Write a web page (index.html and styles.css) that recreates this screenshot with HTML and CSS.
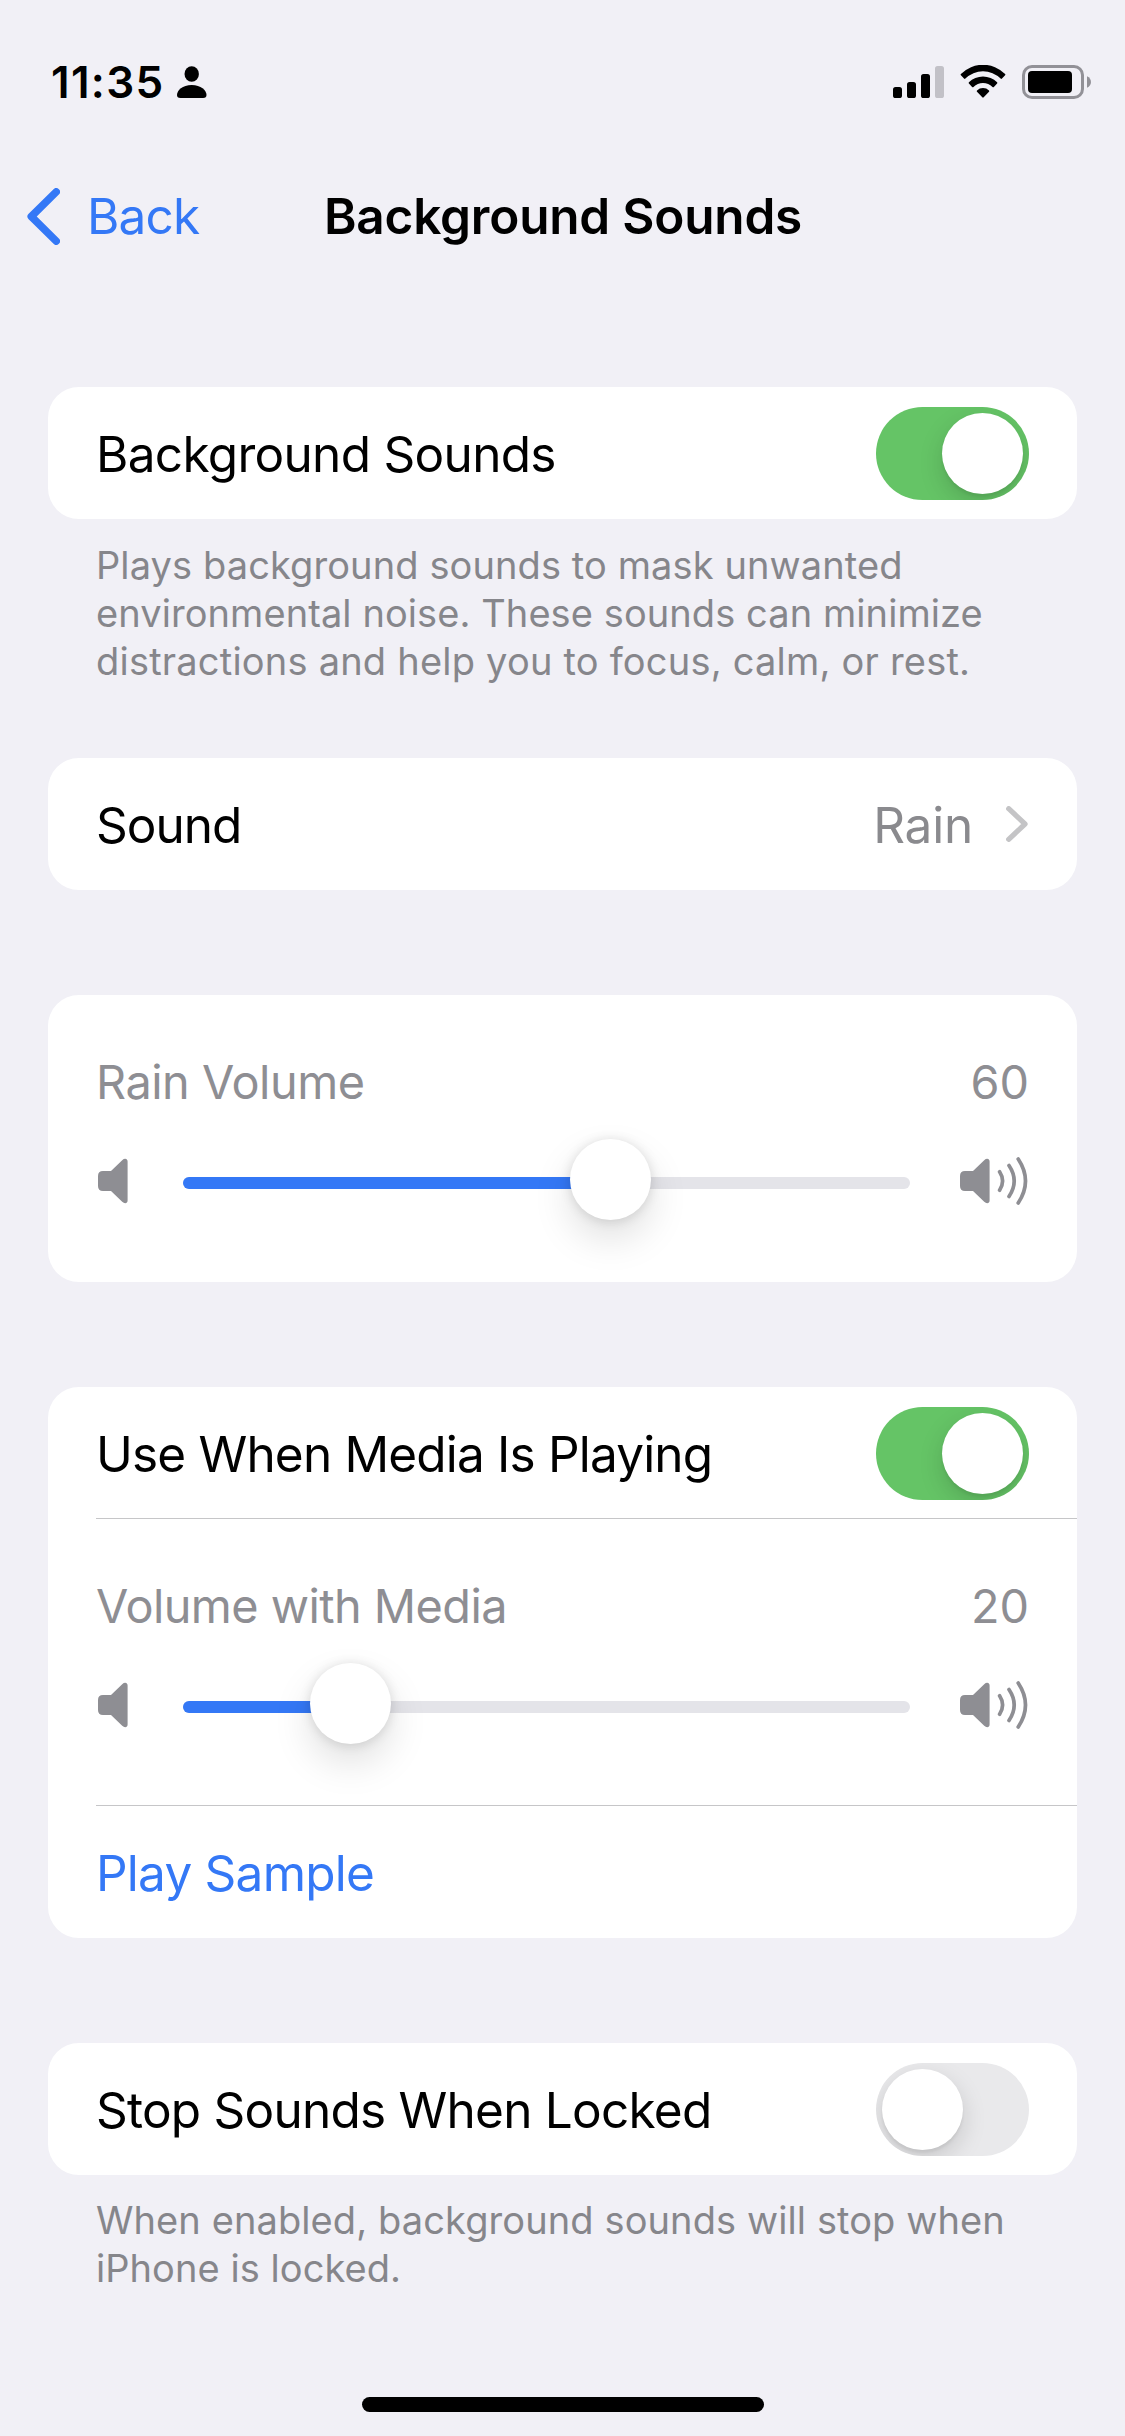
FILE: index.html
```html
<!DOCTYPE html>
<html lang="en">
<head>
<meta charset="utf-8">
<title>Background Sounds</title>
<link rel="stylesheet" href="styles.css">
</head>
<body>
<svg class="symbols" aria-hidden="true">
  <symbol id="speaker-low" viewBox="0 0 30 48">
    <path fill="currentColor" d="M5 14H13L24.2 3.2C26.5 1 29.6 1.4 29.6 4.6V43.4C29.6 46.6 26.5 47 24.2 44.8L13 34H5Q0 34 0 29V19Q0 14 5 14Z"/>
  </symbol>
  <symbol id="speaker-high" viewBox="0 0 68 48">
    <path fill="currentColor" d="M5 14H13L24.2 3.2C26.5 1 29.6 1.4 29.6 4.6V43.4C29.6 46.6 26.5 47 24.2 44.8L13 34H5Q0 34 0 29V19Q0 14 5 14Z"/>
    <path fill="none" stroke="currentColor" stroke-width="3.7" stroke-linecap="round" d="M39.6 14.8Q45.6 24 39.6 33.2M49 8.5Q59.4 24 49 39.5M58.2 2Q72.8 24 58.2 46"/>
  </symbol>
</svg>

<div class="screen">
  <div class="status-bar">
    <div class="status-left">
      <span class="clock">11:35</span>
      <svg class="person" width="30" height="32" viewBox="0 0 30 32">
        <ellipse cx="14.7" cy="8" rx="7.2" ry="7.8"/>
        <path d="M3.5 32C1 32 0 31 0 29C0 24.5 5.5 19 14.7 19S29.5 24.5 29.5 29C29.5 31 28.5 32 26 32Z"/>
      </svg>
    </div>
    <div class="status-right">
      <svg width="51" height="34" viewBox="0 0 51 34">
        <rect x="0" y="22" width="9" height="11" rx="2.6"/>
        <rect x="14" y="17" width="9" height="16" rx="2.6"/>
        <rect x="28" y="9" width="9" height="24" rx="2.6"/>
        <rect x="42" y="1" width="9" height="32" rx="2.6" fill="#c2c1c7"/>
      </svg>
      <svg width="46" height="34" viewBox="0 0 46 34">
        <path d="M.9 9A31 31 0 0 1 45.1 9Q45.7 9.6 45.1 10.2L42 13.6Q41.3 14.2 40.6 13.6A25 25 0 0 0 5.4 13.6Q4.7 14.2 4 13.6L.9 10.2Q.3 9.6 .9 9Z"/>
        <path d="M8.9 17.3A20 20 0 0 1 37.1 17.3Q37.7 18 37.1 18.6L33.9 21.9Q33.2 22.5 32.5 21.9A13.6 13.6 0 0 0 13.5 21.9Q12.8 22.5 12.1 21.9L8.9 18.6Q8.3 18 8.9 17.3Z"/>
        <path d="M17 25.5A8.5 8.5 0 0 1 29 25.5Q29.6 26.2 29 26.8L23.7 32.3Q23 33 22.3 32.3L17 26.8Q16.4 26.2 17 25.5Z"/>
      </svg>
      <svg width="69" height="34" viewBox="0 0 69 34">
        <rect x="1.5" y="1.5" width="59" height="31" rx="8.5" fill="none" stroke="#929197" stroke-width="3"/>
        <rect x="6" y="6" width="44" height="22" rx="4"/>
        <path d="M65 11.3C70.3 13.6 70.3 20.4 65 22.7Z" fill="#929197"/>
      </svg>
    </div>
  </div>

  <div class="nav-bar">
    <div class="back">
      <svg width="33" height="57" viewBox="0 0 33 57">
        <path d="M29.2 3.9L4.3 28.5L29.2 53.1" fill="none" stroke="currentColor" stroke-width="7.6" stroke-linecap="round" stroke-linejoin="round"/>
      </svg>
      <span class="back-label">Back</span>
    </div>
    <div class="title">Background Sounds</div>
  </div>

  <div class="settings">
    <div class="card">
      <div class="row">
        <span class="label label-sounds">Background Sounds</span>
        <span class="toggle toggle-on"><span class="toggle-knob"></span></span>
      </div>
    </div>
    <div class="note">
      <div class="note-a">Plays background sounds to mask unwanted</div>
      <div class="note-b">environmental noise. These sounds can minimize</div>
      <div class="note-c">distractions and help you to focus, calm, or rest.</div>
    </div>

    <div class="card card-after-note">
      <div class="row">
        <span class="label label-sound">Sound</span>
        <span class="choice">
          <span class="label choice-value">Rain</span>
          <svg width="23" height="36" viewBox="0 0 23 36">
            <path d="M2.7 2.7L19 18L2.7 33.3" fill="none" stroke="#c4c4c6" stroke-width="5.2" stroke-linecap="round" stroke-linejoin="round"/>
          </svg>
        </span>
      </div>
    </div>

    <div class="card">
      <div class="volume">
        <div class="volume-head"><span class="name-rain">Rain Volume</span><span>60</span></div>
        <div class="volume-control">
          <svg class="speaker" width="30" height="48"><use href="#speaker-low"/></svg>
          <div class="slider"><div class="slider-fill" style="width: 60%"></div><div class="slider-knob knob-rain"></div></div>
          <svg class="speaker" width="68" height="48"><use href="#speaker-high"/></svg>
        </div>
      </div>
    </div>

    <div class="card">
      <div class="row">
        <span class="label label-media">Use When Media Is Playing</span>
        <span class="toggle toggle-on"><span class="toggle-knob"></span></span>
      </div>
      <div class="separator"></div>
      <div class="volume">
        <div class="volume-head"><span class="name-media">Volume with Media</span><span>20</span></div>
        <div class="volume-control">
          <svg class="speaker" width="30" height="48"><use href="#speaker-low"/></svg>
          <div class="slider"><div class="slider-fill" style="width: 20%"></div><div class="slider-knob knob-media"></div></div>
          <svg class="speaker" width="68" height="48"><use href="#speaker-high"/></svg>
        </div>
      </div>
      <div class="separator"></div>
      <div class="row">
        <span class="label label-play">Play Sample</span>
      </div>
    </div>

    <div class="card">
      <div class="row">
        <span class="label label-stop">Stop Sounds When Locked</span>
        <span class="toggle"><span class="toggle-knob"></span></span>
      </div>
    </div>
    <div class="note note-last">
      <div class="note-d">When enabled, background sounds will stop when</div>
      <div class="note-e">iPhone is locked.</div>
    </div>
  </div>

  <div class="home-indicator"></div>
</div>
</body>
</html>
```

FILE: styles.css
```css
* {
  box-sizing: border-box;
}

body {
  margin: 0;
  background: #f1f0f6;
  color: #000;
  font-family: Inter, "Liberation Sans", sans-serif;
  white-space: nowrap;
}

svg {
  display: block;
  flex: none;
}

.symbols {
  display: none;
}

.screen {
  display: flex;
  flex-direction: column;
  width: 1125px;
  height: 2436px;
  overflow: hidden;
}

/* Status bar */
.status-bar {
  display: flex;
  justify-content: space-between;
  height: 132px;
  padding: 55px 34px 0 51px;
}

.status-left {
  display: flex;
  gap: 12px;
}

.clock {
  width: 114px;
  font-size: 44px;
  font-weight: 600;
  line-height: 54px;
  letter-spacing: 1.3px;
}

.person {
  margin-top: 11px;
}

.status-right {
  display: flex;
  gap: 16px;
  margin-top: 10px;
}

/* Navigation bar */
.nav-bar {
  display: grid;
  grid-template-columns: 1fr auto 1fr;
  align-items: center;
  height: 168px;
  font-size: 49.5px;
  line-height: 60px;
}

.back {
  display: flex;
  align-items: center;
  gap: 27px;
  padding-left: 27px;
  color: #3478f6;
}

.back-label {
  letter-spacing: -0.8px;
}

.title {
  padding-left: 1px;
  font-weight: 600;
  letter-spacing: -0.2px;
}

/* Grouped list */
.settings {
  display: flex;
  flex-direction: column;
  padding: 87px 48px 0;
}

.card {
  border-radius: 31px;
  background: #fff;
}

.card + .card {
  margin-top: 105px;
}

.card-after-note {
  margin-top: 73px;
}

.row {
  display: flex;
  align-items: center;
  justify-content: space-between;
  height: 132px;
  padding: 0 48px;
}

.label {
  padding-top: 2px;
  font-size: 49.5px;
  line-height: 60px;
}

.label-sounds {
  letter-spacing: -0.69px;
}

.label-sound {
  letter-spacing: -0.99px;
}

.label-media {
  letter-spacing: -0.82px;
}

.label-play {
  color: #3478f6;
  letter-spacing: -0.76px;
}

.label-stop {
  letter-spacing: -0.76px;
}

.choice {
  display: flex;
  align-items: center;
  gap: 33px;
}

.choice-value {
  color: #8a8a8e;
  letter-spacing: -0.2px;
}

.separator {
  height: 1px;
  margin: -1px 0 0 48px;
  background: #c6c6c8;
}

.note {
  padding: 22px 48px 0;
  color: #86868b;
  font-size: 38px;
  line-height: 48px;
}

.note-last {
  padding-top: 21px;
}

.note-a {
  letter-spacing: 0.1px;
}

.note-b {
  letter-spacing: 0.08px;
}

.note-c {
  letter-spacing: 0.21px;
}

.note-d {
  letter-spacing: 0.1px;
}

.note-e {
  letter-spacing: 0.06px;
}

/* Switches */
.toggle {
  display: flex;
  width: 153px;
  height: 93px;
  margin-top: 1px;
  padding: 6px;
  border-radius: 47px;
  background: #e9e9eb;
  overflow: hidden;
}

.toggle-on {
  justify-content: flex-end;
  background: #65c466;
}

.toggle-knob {
  width: 81px;
  height: 81px;
  border-radius: 50%;
  background: #fff;
  box-shadow: 0 9px 24px rgba(0, 0, 0, 0.15), 0 3px 3px rgba(0, 0, 0, 0.06);
}

/* Volume sliders */
.volume {
  height: 287px;
  padding: 59px 48px 62px;
  color: #8e8e93;
}

.volume-head {
  display: flex;
  justify-content: space-between;
  font-size: 46.8px;
  line-height: 56px;
}

.name-rain {
  letter-spacing: -0.46px;
}

.name-media {
  letter-spacing: -0.53px;
}

.volume-control {
  display: flex;
  align-items: flex-start;
  height: 81px;
  margin-top: 29px;
  padding: 0 1px 0 2px;
}

.speaker {
  margin-top: 18px;
}

.slider {
  position: relative;
  flex: 1;
  height: 12px;
  margin: 38px 50px 0 55px;
  border-radius: 6px;
  background: #e4e4e9;
}

.slider-fill {
  height: 12px;
  border-radius: 6px;
  background: #3478f6;
}

/* The knob rides over the track and overhangs each end by a few pixels. */
.slider-knob {
  position: absolute;
  top: -38px;
  width: 81px;
  height: 81px;
  border-radius: 50%;
  background: #fff;
  box-shadow: 0 18px 39px rgba(0, 0, 0, 0.13), 0 1px 12px rgba(0, 0, 0, 0.13);
}

.knob-rain {
  left: calc((100% - 77px) * 0.6 - 3px);
}

.knob-media {
  left: calc((100% - 77px) * 0.2 - 3px);
}

.home-indicator {
  width: 402px;
  height: 15px;
  margin: auto auto 24px 362px;
  border-radius: 8px;
  background: #000;
}
```
